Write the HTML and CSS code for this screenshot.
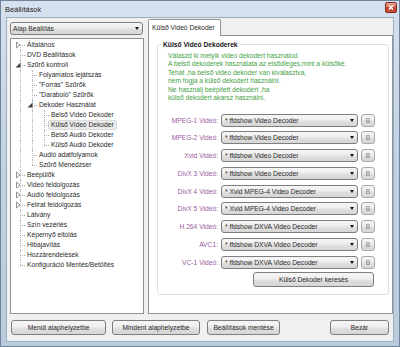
FILE: index.html
```html
<!DOCTYPE html>
<html lang="hu">
<head>
    <meta charset="UTF-8">
    <title>Beállítások</title>
    <link rel="stylesheet" href="styles.css">
</head>
<body>

<div class="window">
    <div class="titlebar">
        <span class="title">Beállítások</span>
        <span class="close">
            <svg width="10" height="9" viewBox="0 0 10 9"><path d="M3 2.5 L7 6.5 M7 2.5 L3 6.5" stroke="#fff" stroke-width="1.4"/></svg>
        </span>
    </div>

    <div class="client">
        <div class="main">
            <!-- Bal oldal: profil választó és a fa -->
            <div class="left">
                <div class="combo">
                    <span>Alap Beállítás</span>
                    <i class="arrow"></i>
                </div>
                <div id="tree" class="tree"></div>
            </div>

            <!-- Jobb oldal: fül és a dekoder lista -->
            <div class="right">
                <div class="tabs">
                    <div class="tab">Külső Videó Dekoder</div>
                </div>
                <div class="tab-panel">
                    <fieldset class="group">
                        <legend>Külső Videó Dekoderek</legend>
                        <p class="hint">
                            Válaszd ki melyik video dekodert használod.<br>
                            A belső dekoderek használata az elsődleges,mint a külsőké.<br>
                            Tehát ,ha belső video dekoder van kiválasztva,<br>
                            nem fogja a külső dekodert használni.<br>
                            Ne használj beépitett dekodert ,ha<br>
                            külső dekodert akarsz használni.
                        </p>
                        <div id="rows" class="rows"></div>
                        <div class="search-row">
                            <button class="btn search">Külső Dekoder keresés</button>
                        </div>
                    </fieldset>
                </div>
            </div>
        </div>

        <div class="footer">
            <button class="btn btn-menu">Menüt alaphelyzetbe</button>
            <button class="btn btn-all">Mindent alaphelyzetbe</button>
            <button class="btn btn-save">Beállítások mentése</button>
            <button class="btn btn-close">Bezár</button>
        </div>
    </div>
</div>

<script>
    // A fa elemei: [szint, felirat, állapot]
    const items = [
        [0, "Általános", "closed"],
        [0, "DVD Beállítások"],
        [0, "Szűrő kontroll", "open"],
        [1, "Folyamatos lejátszás"],
        [1, "\"Forrás\" Szűrők"],
        [1, "\"Daraboló\" Szűrők"],
        [1, "Dekoder Használat", "open"],
        [2, "Belső Videó Dekoder"],
        [2, "Külső Videó Dekoder", "selected"],
        [2, "Belső Audió Dekoder"],
        [2, "Külső Audió Dekoder"],
        [1, "Audió adatfolyamok"],
        [1, "Szűrő Menedzser"],
        [0, "Beépülők", "closed"],
        [0, "Videó feldolgozás", "closed"],
        [0, "Audió feldolgozás", "closed"],
        [0, "Felirat feldolgozás", "closed"],
        [0, "Látvány"],
        [0, "Szín vezérlés"],
        [0, "Képernyő eltolás"],
        [0, "Hibajavítás"],
        [0, "Hozzárendelések"],
        [0, "Konfiguráció Mentés/Betöltés"]
    ];

    const closedIcon = '<svg class="exp" width="6" height="8" viewBox="0 0 6 8"><path d="M1.5 1 L5 4 L1.5 7 Z" fill="#fff" stroke="#949494"/></svg>';
    const openIcon = '<svg class="exp open" width="6" height="6" viewBox="0 0 6 6"><path d="M5.5 0.5 V5.5 H0.5 Z" fill="#444"/></svg>';

    function isLast(i) {
        const lvl = items[i][0];
        for (let j = i + 1; j < items.length; j++) {
            if (items[j][0] < lvl) return true;
            if (items[j][0] === lvl) return false;
        }
        return true;
    }

    const tree = document.getElementById("tree");
    const lastAt = [];
    items.forEach(([lvl, text, state], i) => {
        const row = document.createElement("div");
        row.className = "tree-row";

        for (let k = 0; k < lvl; k++) {
            const g = document.createElement("span");
            g.className = lastAt[k] ? "guide" : "guide line";
            row.appendChild(g);
        }

        const last = isLast(i);
        lastAt[lvl] = last;

        const node = document.createElement("span");
        node.className = "node" + (last ? " last" : "") + (i === 0 ? " first" : "");
        if (state === "closed") node.innerHTML = closedIcon;
        if (state === "open") node.innerHTML = openIcon;
        row.appendChild(node);

        const label = document.createElement("span");
        label.className = "label" + (state === "selected" ? " selected" : "");
        label.textContent = text;
        row.appendChild(label);

        tree.appendChild(row);
    });

    // Dekoder sorok
    const decoders = [
        ["MPEG-1 Videó:", "* ffdshow Video Decoder"],
        ["MPEG-2 Videó:", "* ffdshow Video Decoder"],
        ["Xvid Videó:", "* ffdshow Video Decoder"],
        ["DivX 3 Videó:", "* ffdshow Video Decoder"],
        ["DivX 4 Videó:", "* Xvid MPEG-4 Video Decoder"],
        ["DivX 5 Videó:", "* Xvid MPEG-4 Video Decoder"],
        ["H.264 Videó:", "* ffdshow DXVA Video Decoder"],
        ["AVC1:", "* ffdshow DXVA Video Decoder"],
        ["VC-1 Videó:", "* ffdshow DXVA Video Decoder"]
    ];

    const rows = document.getElementById("rows");
    decoders.forEach(([name, value]) => {
        const row = document.createElement("div");
        row.className = "row";
        row.innerHTML =
            '<label>' + name + '</label>' +
            '<div class="combo wide"><span>' + value + '</span><i class="arrow"></i></div>' +
            '<button class="btn btn-b">B</button>';
        rows.appendChild(row);
    });
</script>

</body>
</html>
```

FILE: styles.css
```css
body {
    margin: 0;
    font-family: "Liberation Sans", Arial, sans-serif;
    font-size: 6.7px;
    color: #2a2a2a;
}

.window {
    width: 400px;
    height: 347px;
    box-sizing: border-box;
    border: 1px solid #6f839a;
    background: linear-gradient(#d6e1ee, #c4d3e3 40%, #bccbdb);
    display: flex;
    flex-direction: column;
}

.titlebar {
    height: 16px;
    display: flex;
    align-items: center;
    padding-left: 4px;
}

.title {
    flex: 1;
    font-size: 7.4px;
    color: #1b1b1b;
}

.close {
    align-self: flex-start;
    margin: 1px 2px 0 0;
    width: 12px;
    height: 11px;
    box-sizing: border-box;
    border: 1px solid #7d2a1e;
    border-radius: 2px;
    background: linear-gradient(#eaa99b, #d66a55 45%, #c13e2b 55%, #c9523c);
    display: flex;
    align-items: center;
    justify-content: center;
}

.client {
    flex: 1;
    margin: 0 5px 4px;
    border: 1px solid #9badc1;
    background: #f0f0f0;
    padding: 1px 0 0 3px;
    display: flex;
    flex-direction: column;
}

.main {
    display: grid;
    grid-template-columns: 134px 245px;
    column-gap: 4px;
    height: 295px;
}

/* Bal oszlop */
.left {
    display: flex;
    flex-direction: column;
}

.left .combo {
    margin-top: 3px;
    width: 133px;
    padding-left: 2px;
}

.tree {
    margin-top: 3px;
    flex: 1;
    background: #fff;
    border: 1px solid #8e939b;
    padding: 1px 0 0 3px;
}

.tree-row {
    display: flex;
    height: 10px;
    white-space: nowrap;
}

.guide,
.node {
    position: relative;
    flex: none;
    width: 12px;
}

.guide.line::before,
.node::before {
    content: "";
    position: absolute;
    left: 6px;
    top: 0;
    bottom: 0;
    border-left: 1px dotted #bcbcbc;
}

.node.first::before {
    top: 5px;
}

.node.last::before {
    bottom: 5px;
}

.node::after {
    content: "";
    position: absolute;
    left: 6px;
    top: 5px;
    width: 5px;
    border-top: 1px dotted #a8a8a8;
}

.node .exp {
    position: absolute;
    left: 1px;
    top: 1px;
    z-index: 1;
}

.node .exp.open {
    top: 2px;
}

.label {
    margin-left: -2px;
    padding: 0 2px;
    height: 10px;
    line-height: 8px;
    box-sizing: border-box;
    border: 1px solid transparent;
    border-radius: 2px;
}

.label.selected {
    background: #ebebeb;
    border-color: #dadada;
}

/* Jobb oszlop */
.right {
    display: flex;
    flex-direction: column;
}

.tabs {
    display: flex;
    height: 16px;
}

.tab {
    position: relative;
    z-index: 1;
    width: 73px;
    height: 17px;
    box-sizing: border-box;
    border: 1px solid #8e939b;
    border-bottom: none;
    border-radius: 2px 2px 0 0;
    background: #fff;
    padding-left: 3px;
    line-height: 15px;
    white-space: nowrap;
}

.tab-panel {
    flex: 1;
    background: #fff;
    border: 1px solid #8e939b;
}

.group {
    margin: 4px 3px 0 8px;
    padding: 0 13px 7px 10px;
    border: 1px solid #dae2e8;
    border-radius: 3px;
    min-width: 0;
}

.group legend {
    font-weight: bold;
    line-height: 9px;
    padding: 0 2px;
    margin-left: -7px;
    color: #151515;
}

.hint {
    margin: 2.75px 0 0;
    line-height: 8.5px;
    color: #45a245;
}

.rows {
    display: flex;
    flex-direction: column;
    gap: 4.75px;
    margin-top: 10.75px;
}

.row {
    display: flex;
    justify-content: flex-end;
    align-items: center;
    gap: 3px;
    height: 13px;
}

.row label {
    color: #9a5c9e;
}

.combo {
    display: flex;
    align-items: center;
    box-sizing: border-box;
    height: 13px;
    border: 1px solid #7e7e7e;
    border-radius: 3px;
    background: linear-gradient(#f6f6f6, #eeeeee 45%, #e0e0e0 55%, #d6d6d6);
    padding: 0 3px 0 3px;
    white-space: nowrap;
}

.combo span {
    flex: 1;
}

.combo .arrow {
    width: 0;
    height: 0;
    border-left: 2.5px solid transparent;
    border-right: 2.5px solid transparent;
    border-top: 3px solid #111;
}

.row .combo {
    width: 137px;
}

.btn {
    box-sizing: border-box;
    height: 15px;
    padding: 0;
    border: 1px solid #7e7e7e;
    border-radius: 3px;
    background: linear-gradient(#f6f6f6, #eeeeee 45%, #e0e0e0 55%, #d6d6d6);
    font: inherit;
    color: #2a2a2a;
}

.btn-b {
    width: 14px;
    height: 13px;
    border-color: #a8a8a8;
    color: #808080;
}

.search-row {
    display: flex;
    justify-content: flex-end;
    margin-top: 3.5px;
}

.search {
    width: 121px;
    margin-right: 1px;
}

/* Gombok alul */
.footer {
    display: flex;
    margin-top: 6px;
    padding-left: 1px;
}

.btn-menu {
    width: 95px;
}

.btn-all {
    width: 88px;
    margin-left: 6px;
}

.btn-save {
    width: 73px;
    margin-left: 7px;
}

.btn-close {
    width: 59px;
    margin-left: auto;
    margin-right: 4px;
}
```
